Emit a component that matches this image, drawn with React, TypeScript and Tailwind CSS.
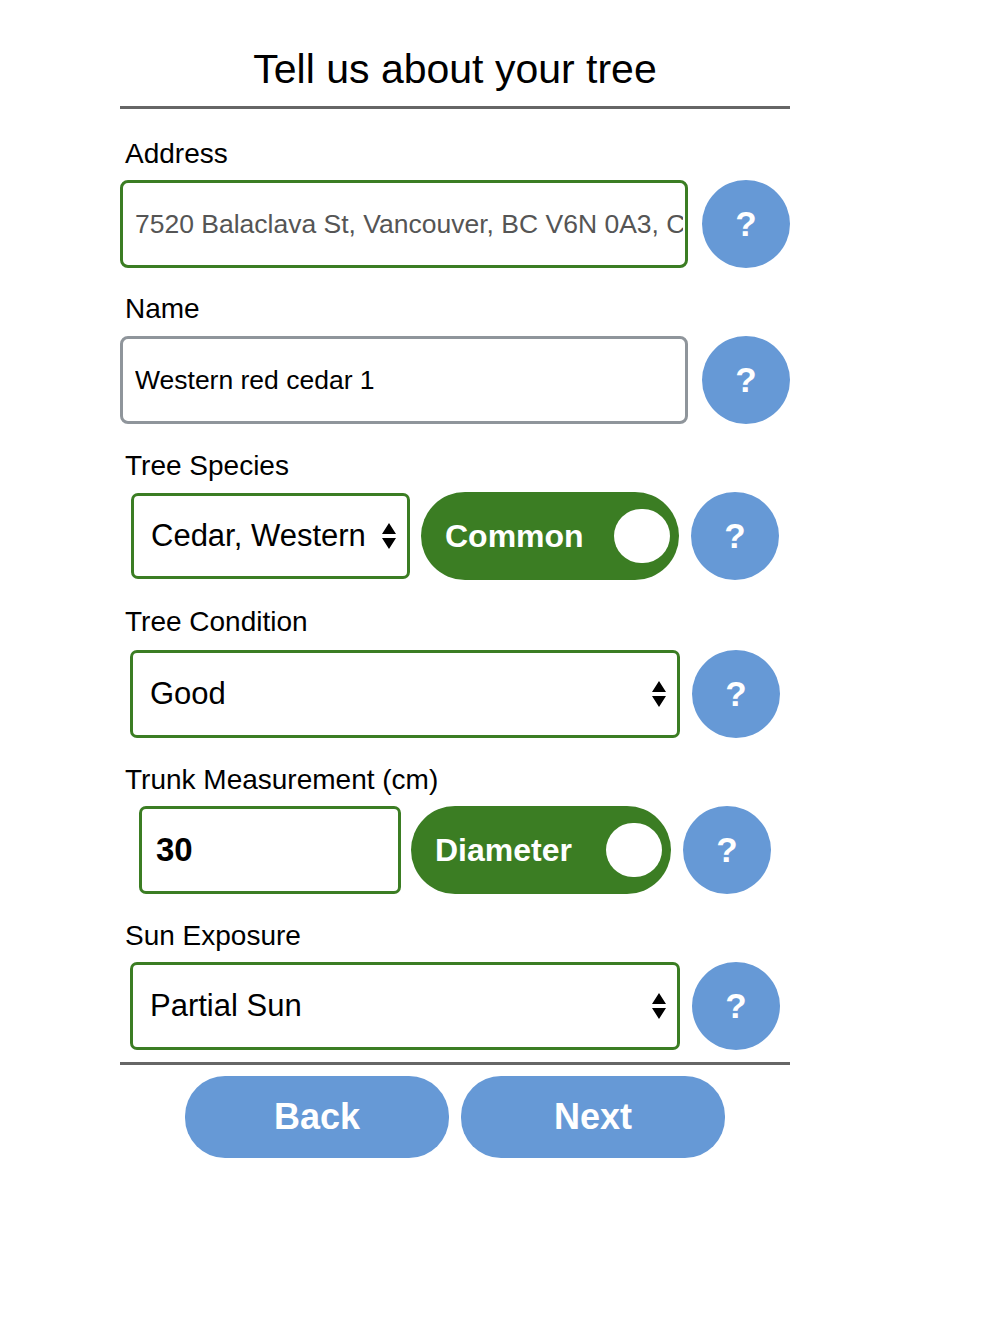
import clsx from 'clsx'
import { FC } from 'react'

const HelpButton: FC = () => (
  <button className="w-[88px] h-[88px] shrink-0 rounded-full bg-[#6699d6] text-white text-[35px] font-bold flex items-center justify-center leading-none pb-[2px]">
    ?
  </button>
)

const Arrows: FC = () => (
  <svg width="14" height="26" viewBox="0 0 14 26" className="shrink-0">
    <path d="M7 0 L14 11 H0 Z M0 15 H14 L7 26 Z" fill="#000" />
  </svg>
)

interface SelectBoxProps {
  value: string
  className: string
}

const SelectBox: FC<SelectBoxProps> = ({ value, className }) => (
  <div
    className={clsx(
      'h-[86px] shrink-0 flex items-center justify-between border-[3px] border-[#3b7d23] rounded-[7px] bg-white pl-[17px] pr-[11px] text-[31px] text-black',
      className
    )}
  >
    <span className="whitespace-nowrap">{value}</span>
    <Arrows />
  </div>
)

interface ToggleProps {
  label: string
  className: string
}

const Toggle: FC<ToggleProps> = ({ label, className }) => (
  <div
    className={clsx(
      'h-[88px] shrink-0 rounded-full bg-[#3b7d23] flex items-center justify-between pl-[24px] pr-[9px]',
      className
    )}
  >
    <span className="text-white text-[32px] font-bold">{label}</span>
    <div className="w-[56px] h-[54px] rounded-full bg-white" />
  </div>
)

const Label: FC<{ children: string }> = ({ children }) => (
  <div className="pl-[5px] text-[28px] leading-[32px] text-black">{children}</div>
)

export default function App() {
  return (
    <div className="min-h-[1334px] bg-white font-['Liberation_Sans',Arial,sans-serif]">
      <div className="ml-[120px] w-[670px] pt-[45px]">
        <h1 className="text-center text-[41px] leading-[48px] text-black">Tell us about your tree</h1>
        <div className="mt-[13px] h-[3px] bg-[#666]" />

        <div className="mt-[29px]">
          <Label>Address</Label>
          <div className="mt-[10px] flex items-center justify-between">
            <input
              readOnly
              value="7520 Balaclava St, Vancouver, BC V6N 0A3, Canada"
              className="w-[568px] h-[88px] border-[3px] border-[#3b7d23] rounded-[8px] pl-[12px] pr-[2px] text-[26.5px] text-[#555] outline-none bg-white"
            />
            <HelpButton />
          </div>
        </div>

        <div className="mt-[25px]">
          <Label>Name</Label>
          <div className="mt-[11px] flex items-center justify-between">
            <input
              readOnly
              value="Western red cedar 1"
              className="w-[568px] h-[88px] border-[3px] border-[#8f959b] rounded-[8px] px-[12px] text-[26.5px] text-black outline-none bg-white"
            />
            <HelpButton />
          </div>
        </div>

        <div className="mt-[26px]">
          <Label>Tree Species</Label>
          <div className="mt-[10px] flex items-center justify-center">
            <SelectBox value="Cedar, Western" className="w-[279px]" />
            <Toggle label="Common" className="ml-[11px] w-[258px]" />
            <div className="ml-[12px]">
              <HelpButton />
            </div>
          </div>
        </div>

        <div className="mt-[26px]">
          <Label>Tree Condition</Label>
          <div className="mt-[12px] flex items-center justify-center gap-[12px]">
            <SelectBox value="Good" className="w-[550px] h-[88px]" />
            <HelpButton />
          </div>
        </div>

        <div className="mt-[26px]">
          <Label>Trunk Measurement (cm)</Label>
          <div className="mt-[10px] flex items-center justify-center">
            <input
              readOnly
              value="30"
              className="w-[262px] h-[88px] border-[3px] border-[#3b7d23] rounded-[7px] px-[14px] text-[33px] font-bold text-black outline-none bg-white"
            />
            <Toggle label="Diameter" className="ml-[10px] w-[260px]" />
            <div className="ml-[12px]">
              <HelpButton />
            </div>
          </div>
        </div>

        <div className="mt-[26px]">
          <Label>Sun Exposure</Label>
          <div className="mt-[10px] flex items-center justify-center gap-[12px]">
            <SelectBox value="Partial Sun" className="w-[550px] h-[88px]" />
            <HelpButton />
          </div>
        </div>

        <div className="mt-[12px] h-[3px] bg-[#666]" />

        <div className="mt-[11px] flex justify-center gap-[12px]">
          <button className="w-[264px] h-[82px] rounded-[40px] bg-[#6699d6] text-white text-[36px] font-bold">
            Back
          </button>
          <button className="w-[264px] h-[82px] rounded-[40px] bg-[#6699d6] text-white text-[36px] font-bold">
            Next
          </button>
        </div>
      </div>
    </div>
  )
}
